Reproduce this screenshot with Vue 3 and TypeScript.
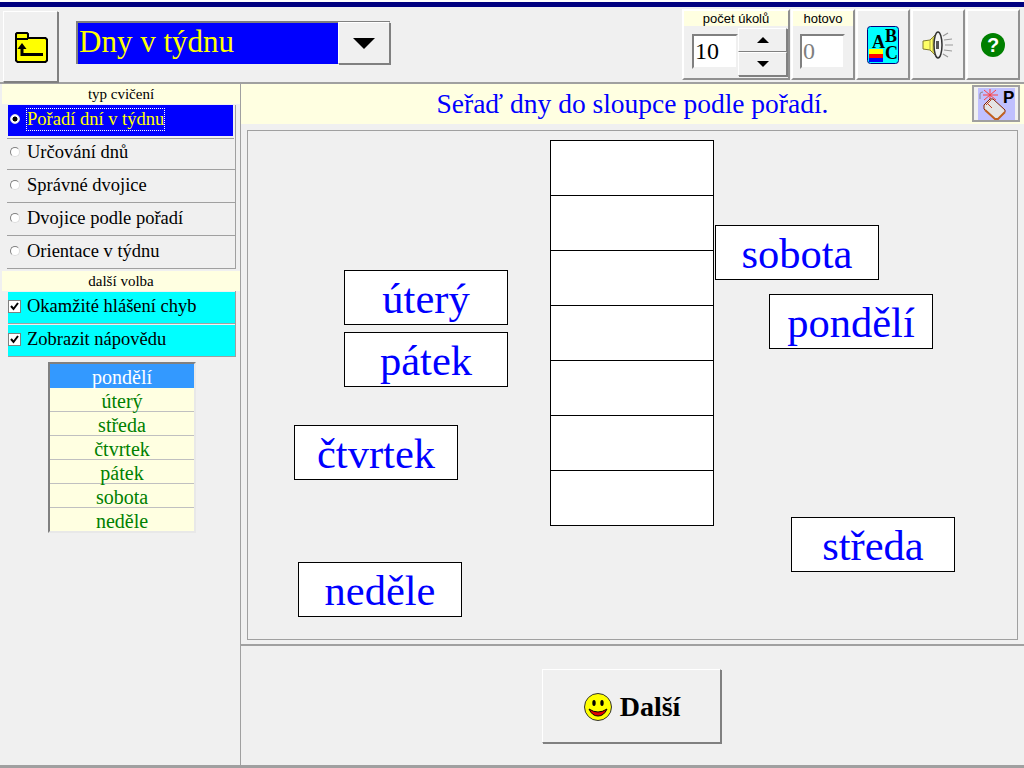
<script setup lang="ts">
import { ref } from 'vue'

interface Card {
  text: string
  left: number
  top: number
}

const exerciseTypes = [
  'Pořadí dní v týdnu',
  'Určování dnů',
  'Správné dvojice',
  'Dvojice podle pořadí',
  'Orientace v týdnu',
]
const options = ['Okamžité hlášení chyb', 'Zobrazit nápovědu']
const days = ['pondělí', 'úterý', 'středa', 'čtvrtek', 'pátek', 'sobota', 'neděle']
const slots = Array.from({ length: 7 }, (_, i) => i)

// positions inside the play area, the cards are scattered by the exercise
const cards: Card[] = [
  { text: 'sobota', left: 467, top: 94 },
  { text: 'pondělí', left: 521, top: 163 },
  { text: 'úterý', left: 96, top: 139 },
  { text: 'pátek', left: 96, top: 201 },
  { text: 'čtvrtek', left: 46, top: 294 },
  { text: 'středa', left: 543, top: 386 },
  { text: 'neděle', left: 50, top: 431 },
]

const selectedType = ref(0)
const selectedDay = ref(0)
const taskCount = ref(10)
</script>

<template>
  <div class="app">
    <div class="titlebar"></div>
    <header class="toolbar">
      <button class="btn back">
        <svg width="34" height="32" viewBox="0 0 34 32">
          <path d="M2 8V3L3 2H13L14 3V7H31.500L33 8.500V29.500L31.500 31H3.500L2 29.500Z" fill="#ffff00" stroke="#000" stroke-width="2" />
          <path d="M2 8H14" stroke="#000" stroke-width="2" />
          <path d="M8 15V23.500H29" fill="none" stroke="#000" stroke-width="3" />
          <path d="M3.500 18L8 12L12.500 18Z" fill="#000" />
        </svg>
      </button>
      <div class="combo">
        <div class="combo-value">Dny v týdnu</div>
        <div class="btn combo-arrow"><span class="tri-down"></span></div>
      </div>
      <div class="spacer"></div>
      <div class="group">
        <div class="group-title">počet úkolů</div>
        <div class="group-body">
          <div class="field">{{ taskCount }}</div>
          <div class="spin">
            <div class="btn spin-btn"><span class="tri-up small"></span></div>
            <div class="btn spin-btn"><span class="tri-down small"></span></div>
          </div>
        </div>
      </div>
      <div class="group done">
        <div class="group-title">hotovo</div>
        <div class="group-body">
          <div class="field disabled">0</div>
        </div>
      </div>
      <button class="btn tool">
        <svg width="32" height="38" viewBox="0 0 32 38">
          <rect x="0.500" y="0.500" width="31" height="37" rx="3" fill="#00ffff" stroke="#000080" />
          <rect x="2" y="23" width="14" height="5" fill="#ffff00" />
          <rect x="2" y="28" width="14" height="4" fill="#ff0000" />
          <rect x="2" y="32" width="14" height="4" fill="#0000ff" />
          <text x="5" y="22" class="abc">A</text>
          <text x="18" y="16" class="abc">B</text>
          <text x="18" y="33" class="abc">C</text>
        </svg>
      </button>
      <button class="btn tool">
        <svg width="32" height="30" viewBox="0 0 32 30">
          <path d="M1 11L8 10L16 2V28L8 20L1 19Z" fill="#ffff66" stroke="#807a30" />
          <path d="M8 10V20M11 7V23" stroke="#b0a840" />
          <ellipse cx="16" cy="15" rx="4" ry="13" fill="#f4f4f4" stroke="#333" stroke-width="1.500" />
          <rect x="14" y="11" width="3" height="8" fill="#555" />
          <path d="M21 6L26 3M22 10L30 9M23 15H31M22 20L30 21M21 24L26 27" stroke="#999" stroke-width="1.200" fill="none" />
        </svg>
      </button>
      <button class="btn tool">
        <svg width="24" height="24" viewBox="0 0 24 24">
          <circle cx="12" cy="12" r="12" fill="#008000" />
          <text x="12" y="19" text-anchor="middle" class="help">?</text>
        </svg>
      </button>
    </header>

    <div class="main">
      <aside class="sidebar">
        <div class="side-title">typ cvičení</div>
        <ul class="choice-list">
          <li
            v-for="(t, i) in exerciseTypes"
            :key="t"
            class="choice"
            :class="{ active: i === selectedType }"
          >
            <span class="radio" :class="{ on: i === selectedType }"></span>
            <span class="choice-label">{{ t }}</span>
          </li>
        </ul>
        <div class="side-title second">další volba</div>
        <ul class="choice-list">
          <li v-for="o in options" :key="o" class="choice check-row">
            <span class="check">
              <svg width="9" height="9" viewBox="0 0 9 9">
                <path d="M1 4L3.500 7L8 1" fill="none" stroke="#000" stroke-width="2" />
              </svg>
            </span>
            <span class="choice-label">{{ o }}</span>
          </li>
        </ul>
        <ul class="day-list">
          <li
            v-for="(d, i) in days"
            :key="d"
            class="day"
            :class="{ current: i === selectedDay }"
          >{{ d }}</li>
        </ul>
      </aside>

      <main class="content">
        <div class="prompt">
          <span class="prompt-text">Seřaď dny do sloupce podle pořadí.</span>
          <button class="btn-mouse">
            <svg width="37" height="32" viewBox="0 0 37 32">
              <rect width="37" height="32" fill="#c0c0ff" />
              <path d="M12 1V12M5 7H20M6 2L18 12M18 2L6 12" stroke="#ff4040" />
              <path d="M2 11V6Q2 4 5 4" stroke="#888" fill="none" />
              <path d="M6 17L12 11H15L27 22V24L20 31H17L6 21Z" fill="#e4e4e4" stroke="#802000" />
              <path d="M7 22L17 31H20L27 24" fill="none" stroke="#c06020" stroke-width="2" />
              <path d="M9 15L14 20M13 12L8 17" stroke="#c04020" />
              <text x="25" y="15" class="mouse-p">P</text>
            </svg>
          </button>
        </div>
        <div class="board-wrap">
          <section class="board">
            <div class="slots">
              <div v-for="s in slots" :key="s" class="slot"></div>
            </div>
            <div
              v-for="c in cards"
              :key="c.text"
              class="card"
              :style="{ left: c.left + 'px', top: c.top + 'px' }"
            >{{ c.text }}</div>
          </section>
        </div>
        <footer class="footer">
          <button class="btn next">
            <svg width="30" height="30" viewBox="0 0 30 30">
              <circle cx="15" cy="15" r="13.500" fill="#ffff00" stroke="#333" />
              <ellipse cx="11" cy="11" rx="1.700" ry="3" fill="#000" />
              <ellipse cx="19" cy="11" rx="1.700" ry="3" fill="#000" />
              <path d="M6 17Q15 23 24 17Q21 24 15 24Q9 24 6 17Z" fill="#e00000" stroke="#000" />
            </svg>
            <span>Další</span>
          </button>
        </footer>
      </main>
    </div>
  </div>
</template>

<style scoped>
.app {
  width: 1024px;
  height: 768px;
  display: flex;
  flex-direction: column;
  background: #f0f0f0;
  font-family: "Liberation Serif", serif;
  overflow: hidden;
  box-sizing: border-box;
  border-top: 2px solid #fff;
  border-bottom: 3px solid #a0a0a0;
}
.titlebar {
  height: 5px;
  background: #000080;
  flex: none;
}
.btn {
  box-sizing: border-box;
  background: #f0f0f0;
  border: 1px solid;
  border-color: #fff #808080 #808080 #fff;
  box-shadow: 1px 1px 0 #808080;
  padding: 0;
  display: flex;
  align-items: center;
  justify-content: center;
}
.toolbar {
  height: 77px;
  flex: none;
  display: flex;
  box-sizing: border-box;
  border-bottom: 2px solid #a0a0a0;
  padding: 2px 0 0 3px;
}
.back {
  width: 55px;
  height: 71px;
  margin-top: 2px;
}
.combo {
  margin: 12px 0 0 18px;
  width: 314px;
  height: 43px;
  display: flex;
  box-sizing: border-box;
  border-top: 2px solid #808080;
  border-left: 2px solid #808080;
}
.combo-value {
  flex: 1;
  background: #0000ff;
  color: #ffff00;
  font-size: 31px;
  line-height: 38px;
  padding-left: 1px;
}
.combo-arrow {
  width: 52px;
  margin-top: -1px;
}
.tri-down,
.tri-up {
  display: block;
  width: 0;
  height: 0;
  border-left: 11px solid transparent;
  border-right: 11px solid transparent;
}
.tri-down { border-top: 11px solid #000; }
.tri-up { border-bottom: 11px solid #000; }
.tri-down.small { border-width: 6px 6px 0; border-color: #000 transparent transparent; }
.tri-up.small { border-width: 0 6px 6px; border-color: transparent transparent #000; }
.spacer { flex: 1; }
.group {
  width: 108px;
  height: 71px;
  box-sizing: border-box;
  border: 2px solid;
  border-color: #fff #909090 #909090 #fff;
  font-family: "Liberation Sans", sans-serif;
}
.group.done {
  width: 64px;
  margin-left: 1px;
}
.group-title {
  height: 15px;
  background: #ffffe1;
  font-size: 13px;
  line-height: 15px;
  text-align: center;
}
.group-body {
  display: flex;
  padding: 2px 0 0 8px;
}
.done .group-body { padding: 8px 0 0 7px; }
.field {
  box-sizing: border-box;
  width: 46px;
  height: 35px;
  background: #fff;
  border: 2px solid;
  border-color: #808080 #f0f0f0 #f0f0f0 #808080;
  font-family: "Liberation Serif", serif;
  font-size: 24px;
  line-height: 31px;
  padding-left: 1px;
  margin-top: 6px;
}
.done .field {
  margin-top: 0;
  width: 45px;
  color: #808080;
}
.spin {
  display: flex;
  flex-direction: column;
  width: 49px;
}
.spin-btn {
  height: 24px;
  width: 49px;
}
.tool {
  width: 54px;
  height: 71px;
  margin-left: 1px;
  border-width: 2px;
  border-color: #fff #909090 #909090 #fff;
  box-shadow: none;
}
.tool:last-child { margin-right: 4px; }
.abc {
  font-family: "Liberation Serif", serif;
  font-weight: 700;
  font-size: 18px;
}
.help {
  font-family: "Liberation Sans", sans-serif;
  font-weight: 700;
  font-size: 20px;
  fill: #fff;
}
.mouse-p {
  font-family: "Liberation Sans", sans-serif;
  font-weight: 700;
  font-size: 17px;
}
.main {
  flex: 1;
  display: flex;
  min-height: 0;
}
.sidebar {
  width: 241px;
  flex: none;
  box-sizing: border-box;
  border-right: 1px solid #a0a0a0;
  padding-left: 2px;
}
.side-title {
  height: 20px;
  background: #ffffe1;
  font-size: 15px;
  line-height: 20px;
  text-align: center;
}
.side-title.second {
  margin-top: 2px;
}
ul {
  list-style: none;
  margin: 0;
  padding: 0;
}
.choice-list {
  margin: 0 4px 0 5px;
  border-right: 1px solid #a0a0a0;
}
.choice {
  height: 33px;
  box-sizing: border-box;
  border-bottom: 1px solid #a0a0a0;
  display: flex;
  align-items: center;
  padding: 0 0 2px 3px;
  font-size: 18.500px;
}
.choice.active {
  color: #ffff00;
  background: #0000ff;
  margin: 1px 2px 1px 1px;
  height: 31px;
  padding: 0 0 3px 2px;
  border-bottom: none;
  box-shadow: 0 1px 0 1px #f0f0f0, 0 2px 0 1px #a0a0a0;
}
.active .choice-label {
  outline: 1px dotted #fff;
}
.radio {
  width: 10px;
  height: 10px;
  margin-right: 7px;
  border-radius: 50%;
  background: #fff;
  border: 1px solid;
  border-color: #808080 #ddd #ddd #808080;
  flex: none;
  box-sizing: border-box;
}
.radio.on {
  background: radial-gradient(circle, #000 0 2.200px, #fff 2.800px);
  border-color: #ddd;
}
.check-row {
  background: #00ffff;
  background-clip: padding-box;
  border-top: 1px solid #f0f0f0;
  padding: 0 0 2px 0;
  margin-left: 1px;
}
.check {
  width: 13px;
  height: 13px;
  background: #fff;
  border: 1px solid #808080;
  box-sizing: border-box;
  margin-right: 6px;
  display: flex;
  align-items: center;
  justify-content: center;
  flex: none;
}
.day-list {
  width: 148px;
  margin: 5px 0 0 46px;
  box-sizing: border-box;
  border: 2px solid;
  border-color: #808080 #e8e8e8 #e8e8e8 #808080;
}
.day {
  height: 24px;
  box-sizing: border-box;
  background: #ffffe1;
  border-bottom: 1px solid #c0c0c0;
  color: #008000;
  font-size: 20px;
  line-height: 26px;
  text-align: center;
}
.day:last-child { border-bottom: none; height: 23px; }
.day.current {
  background: #3399ff;
  color: #fff;
  border-bottom: none;
}
.content {
  flex: 1;
  display: flex;
  flex-direction: column;
  min-width: 0;
}
.prompt {
  height: 40px;
  flex: none;
  background: #ffffe1;
  position: relative;
  display: flex;
  align-items: center;
  justify-content: center;
  color: #0000ff;
  font-size: 27.500px;
}
.btn-mouse {
  position: absolute;
  right: 4px;
  top: 1px;
  padding: 0;
  border: 2px solid #a0a0a0;
  background: #f0f0f0;
  width: 48px;
  height: 37px;
  display: flex;
  align-items: center;
  justify-content: center;
}
.board-wrap {
  flex: none;
  height: 522px;
  box-sizing: border-box;
  border-bottom: 2px solid #a0a0a0;
  padding: 6px 6px 0 6px;
}
.board {
  position: relative;
  height: 510px;
  box-sizing: border-box;
  border: 1px solid #a0a0a0;
}
.slots {
  position: absolute;
  left: 302px;
  top: 9px;
  width: 164px;
}
.slot {
  box-sizing: border-box;
  height: 56px;
  background: #fff;
  border: 1px solid #000;
}
.slot + .slot { margin-top: -1px; }
.card {
  position: absolute;
  box-sizing: border-box;
  width: 164px;
  height: 55px;
  background: #fff;
  border: 1px solid #000;
  color: #0000ff;
  font-size: 42.500px;
  line-height: 55px;
  text-align: center;
}
.footer {
  flex: 1;
  display: flex;
  justify-content: center;
  padding: 23px 0 0 0;
}
.next {
  width: 179px;
  height: 74px;
  gap: 7px;
  padding-top: 2px;
  font-family: "Liberation Serif", serif;
  font-weight: 700;
  font-size: 28px;
  margin-right: 2px;
}
</style>

<style>
html, body {
  margin: 0;
  padding: 0;
  background: #f0f0f0;
}
</style>
